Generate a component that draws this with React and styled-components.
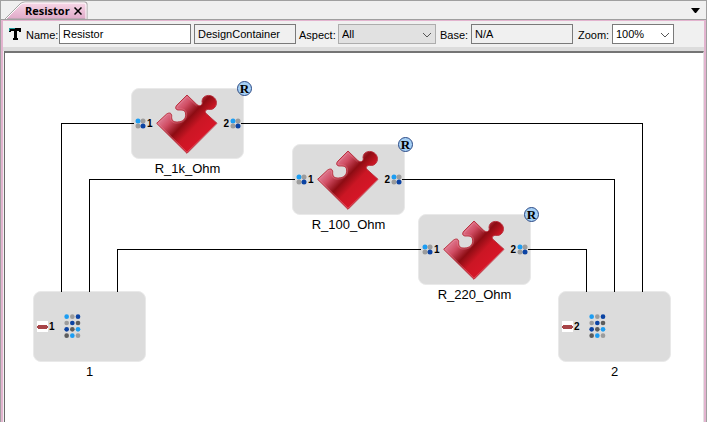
import React, { useState } from 'react';
import styled, { createGlobalStyle } from 'styled-components';

const GlobalStyle = createGlobalStyle`
  * { box-sizing: border-box; }
  body { margin: 0; background: #f0f0f0; }
  body, input, select, button { font-family: "Liberation Sans", Arial, sans-serif; font-size: 11px; color: #000; }
`;

const Window = styled.div`
  display: flex;
  flex-direction: column;
  min-height: 100vh;
  border: solid #a0a0a0;
  border-width: 1px 1px 0;
  background: #f0f0f0;
`;

const TabStrip = styled.header`
  display: flex;
  align-items: flex-end;
  justify-content: space-between;
  height: 19px;
  padding-left: 4px;
  border-bottom: 1px solid #a0a0a0;
`;

const Tab = styled.div`
  position: relative;
  display: flex;
  align-items: center;
  gap: 7px;
  width: 83px;
  height: 18px;
  padding-left: 20px;
  font-family: "Open Sans", "Noto Sans", sans-serif;
  font-size: 11px;
  font-weight: 700;
`;

const TabShape = styled.svg`
  position: absolute;
  inset: 0;
  z-index: 0;
`;

const TabTitle = styled.span`
  position: relative;
  width: 41px;
`;

const IconButton = styled.button`
  position: relative;
  display: flex;
  align-items: center;
  justify-content: center;
  width: ${(p) => (p.$wide ? 21 : 10)}px;
  height: 18px;
  padding: ${(p) => (p.$wide ? 0 : 1)}px 0 0;
  border: 0;
  background: none;
`;

const Body = styled.main`
  flex: 1;
  display: flex;
  flex-direction: column;
  border: solid #e3b4cf;
  border-width: 1px 2px 0;
`;

const Toolbar = styled.form`
  display: flex;
  align-items: center;
  height: 30px;
  padding: 0 0 0 6px;
  border-bottom: 4px solid #dcdcdc;
`;

const TextIcon = styled.svg`
  flex: none;
  margin-right: 5px;
`;

const FieldLabel = styled.label`
  width: ${(p) => p.$width}px;
  padding-top: 2px;
  white-space: nowrap;
`;

const Field = styled.input`
  width: ${(p) => p.$width}px;
  height: 20px;
  margin-right: ${(p) => (p.$gap || 3)}px;
  padding: 0 3px 1px;
  border: 1px solid #7a7a7a;
  border-radius: 0;
  background: ${(p) => (p.readOnly ? '#f0f0f0' : '#fff')};
  outline: none;
`;

const SelectBox = styled.span`
  position: relative;
  display: flex;
  width: ${(p) => p.$width}px;
  height: 20px;
  margin-right: 4px;
`;

const Select = styled.select`
  appearance: none;
  width: 100%;
  padding: 0 3px 1px;
  border: 1px solid ${(p) => (p.$muted ? '#adadad' : '#7a7a7a')};
  border-radius: 0;
  background: ${(p) => (p.$muted ? '#e1e1e1' : '#fff')};
`;

const SelectArrow = styled.svg`
  position: absolute;
  right: 4px;
  top: 8px;
  pointer-events: none;
`;

const Canvas = styled.section`
  position: relative;
  flex: 1;
  min-height: 340px;
  margin-left: 1px;
  border: solid #696969;
  border-width: 2px 0 0 1px;
  border-top-color: #747474;
  border-right: 1px solid #e3e3e3;
  background: #fff;
  overflow: hidden;
`;

const Wires = styled.svg`
  position: absolute;
  left: 0;
  top: 0;
  pointer-events: none;
`;

const Node = styled.figure`
  position: absolute;
  left: ${(p) => p.$x}px;
  top: ${(p) => p.$y}px;
  width: 113px;
  margin: 0;
`;

const Card = styled.div`
  display: grid;
  grid-template-columns: ${(p) => (p.$terminal ? '27px 1fr' : '21px 62px 1fr')};
  align-items: center;
  height: 71px;
  padding: 0 2px 0 3px;
  border: 1px solid #e9e9e9;
  border-radius: 8px;
  background: #dcdcdc;
`;

const Caption = styled.figcaption`
  margin-top: 1px;
  font-size: 13px;
  line-height: 18px;
  text-align: center;
`;

const Port = styled.span`
  display: flex;
  align-items: center;
  justify-content: ${(p) => (p.$end ? 'flex-end' : 'flex-start')};
  gap: 1px;
  font-size: 10px;
  font-weight: 700;
`;

const Badge = styled.span`
  position: absolute;
  right: -8px;
  top: -7px;
  display: flex;
  align-items: center;
  justify-content: center;
  width: 15px;
  height: 15px;
  border: 1px solid #2c4a86;
  border-radius: 50%;
  background: #a6d0f5;
  font-family: "Liberation Serif", serif;
  font-size: 13px;
  line-height: 13px;
  font-weight: 700;
`;

const BLUE = '#1c9df2';
const NAVY = '#0b43a3';
const GRAY = '#9c9c9c';
const DARK = '#5c5c5c';

function PortDots() {
  return (
    <svg width="11" height="11" viewBox="0 0 22 22" aria-hidden="true">
      <circle cx="6" cy="6" r="5" fill={BLUE} />
      <circle cx="16" cy="6" r="5" fill={GRAY} />
      <circle cx="6" cy="16" r="5" fill={GRAY} />
      <circle cx="16" cy="16" r="5" fill={NAVY} />
    </svg>
  );
}

const MATRIX = [BLUE, GRAY, NAVY, GRAY, NAVY, DARK, NAVY, DARK, BLUE, DARK, BLUE, GRAY];

function DotMatrix() {
  return (
    <svg width="17" height="26" viewBox="0 0 51 78" aria-hidden="true">
      {MATRIX.map((color, i) => (
        <circle key={i} cx={8 + (i % 3) * 17} cy={8 + Math.floor(i / 3) * 19} r="7" fill={color} />
      ))}
    </svg>
  );
}

function Puzzle() {
  return (
    <svg width="62" height="62" viewBox="4 14 186 186" aria-hidden="true">
      <defs>
        <linearGradient id="puzzle" gradientUnits="userSpaceOnUse" x1="40" y1="45" x2="150" y2="150">
          <stop offset="0" stopColor="#e898b0" />
          <stop offset="0.28" stopColor="#d04d63" />
          <stop offset="0.5" stopColor="#8d0c13" />
          <stop offset="0.7" stopColor="#cb1624" />
          <stop offset="1" stopColor="#d81628" />
        </linearGradient>
      </defs>
      <path
        d="M97 20 L127 49 C137 56 145 50 142 39 C143 24 158 18 171 23 C185 29 189 44 182 55 C177 63 169 64 160 63 C152 65 149 70 155 76 L187 105 L97 195 L6 105 L36 77 C45 71 52 75 51 84 C50 97 57 102 68 101 C84 101 94 92 93 77 C92 67 86 64 75 65 C62 66 60 58 67 50 Z"
        fill="url(#puzzle)"
        stroke="#b9323f"
        strokeWidth="3"
        strokeLinejoin="round"
      />
      <path
        d="M97 25 L126 53 M187 105 L97 191 L10 105 L37 80 C44 75 48 78 48 86 C47 99 56 105 68 104 C85 104 97 93 96 77 C94 65 87 61 75 62 C66 62 66 58 70 53 L97 25"
        fill="none"
        stroke="#f2a0ad"
        strokeOpacity="0.45"
        strokeWidth="2"
      />
    </svg>
  );
}

function ResistorNode({ x, y, name }) {
  return (
    <Node $x={x} $y={y}>
      <Card>
        <Port><PortDots />1</Port>
        <Puzzle />
        <Port $end>2<PortDots /></Port>
      </Card>
      <Badge>R</Badge>
      <Caption>{name}</Caption>
    </Node>
  );
}

function TerminalNode({ x, y, name }) {
  return (
    <Node $x={x} $y={y}>
      <Card $terminal>
        <Port>
          <svg width="11" height="11" aria-hidden="true">
            <rect width="11" height="11" fill="#fff" />
            <path d="M1 4h9v4h-9z" fill="#a84448" />
            <path d="M0 5h11v2h-11z" fill="#a84448" />
          </svg>
          {name}
        </Port>
        <DotMatrix />
      </Card>
      <Caption>{name}</Caption>
    </Node>
  );
}

function Chevron() {
  return (
    <SelectArrow width="9" height="6" viewBox="0 0 9 6" aria-hidden="true">
      <path d="M0 1l4 4 4-4" fill="none" stroke="#555" />
    </SelectArrow>
  );
}

const WIRES = [
  'M56 239V70H129', 'M84 239V126H290', 'M112 239V196H416',
  'M236 70H637V239', 'M397 126H609V239', 'M523 196H581V239',
];

export default function App() {
  const [name, setName] = useState('Resistor');
  return (
    <Window>
      <GlobalStyle />
      <TabStrip>
        <Tab>
          <TabShape width="83" height="18" viewBox="0 0 83 18" aria-hidden="true">
            <defs>
              <linearGradient id="tab" x1="0" y1="0" x2="0" y2="1">
                <stop offset="0" stopColor="#f8d9e8" />
                <stop offset="1" stopColor="#dfa9c8" />
              </linearGradient>
            </defs>
            <path d="M0 18L15 3Q17 1 20 1H80Q82 1 82 3V18Z" fill="url(#tab)" stroke="#a0a0a0" />
            <path d="M1 18L15 4Q17 2 20 2H79Q81 2 81 4V18" fill="none" stroke="#fff" />
          </TabShape>
          <TabTitle>Resistor</TabTitle>
          <IconButton aria-label="Close tab">
            <svg width="8" height="8" viewBox="0 0 16 16"><path d="M1 1l14 14M15 1L1 15" stroke="#000" strokeWidth="3" /></svg>
          </IconButton>
        </Tab>
        <IconButton $wide aria-label="Tab list">
          <svg width="9" height="5" viewBox="0 0 9 5"><path d="M0 0h9l-4 5h-1z" /></svg>
        </IconButton>
      </TabStrip>
      <Body>
        <Toolbar onSubmit={(e) => e.preventDefault()}>
          <TextIcon width="12" height="12" viewBox="0 0 12 12" aria-hidden="true">
            <path d="M0 0h12v4h-2v-1h-2v7h1v2h-5v-2h1v-7h-3v1h-2z" />
            <path d="M0 0h6v1h-5v2h-1z" fill="#1d9a9a" />
          </TextIcon>
          <FieldLabel htmlFor="name" $width={33}>Name:</FieldLabel>
          <Field id="name" $width={132} value={name} onChange={(e) => setName(e.target.value)} />
          <Field aria-label="Kind" $width={102} readOnly value="DesignContainer" />
          <FieldLabel htmlFor="aspect" $width={39}>Aspect:</FieldLabel>
          <SelectBox $width={98}>
            <Select id="aspect" $muted><option>All</option></Select>
            <Chevron />
          </SelectBox>
          <FieldLabel htmlFor="base" $width={31}>Base:</FieldLabel>
          <Field id="base" $width={102} $gap={5} readOnly value="N/A" />
          <FieldLabel htmlFor="zoom" $width={34}>Zoom:</FieldLabel>
          <SelectBox $width={62}>
            <Select id="zoom"><option>100%</option></Select>
            <Chevron />
          </SelectBox>
        </Toolbar>
        <Canvas>
          <ResistorNode x={126} y={35} name="R_1k_Ohm" />
          <ResistorNode x={287} y={91} name="R_100_Ohm" />
          <ResistorNode x={413} y={161} name="R_220_Ohm" />
          <TerminalNode x={28} y={238} name="1" />
          <TerminalNode x={553} y={238} name="2" />
          <Wires width="700" height="340" viewBox="0 0 700 340" shapeRendering="crispEdges" aria-hidden="true">
            {WIRES.map((d) => <path key={d} d={d} fill="none" stroke="#000" />)}
          </Wires>
        </Canvas>
      </Body>
    </Window>
  );
}
